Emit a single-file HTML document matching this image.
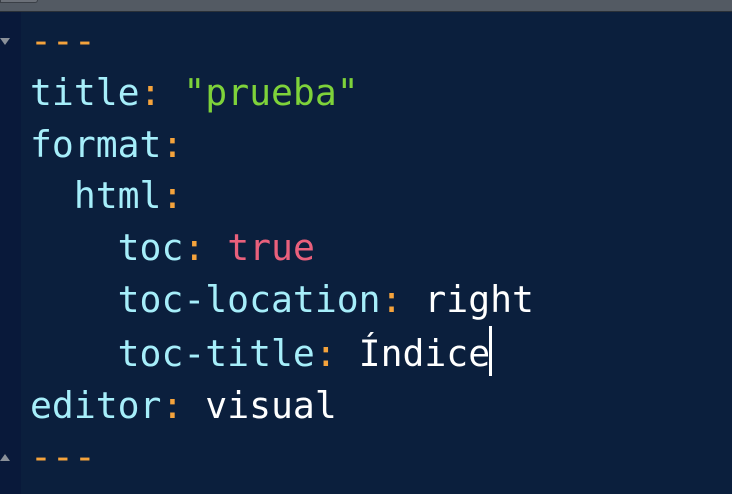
<!DOCTYPE html>
<html><head><meta charset="utf-8"><style>
html,body{margin:0;padding:0;}
body{width:732px;height:494px;background:#0b1f3d;position:relative;overflow:hidden;font-family:"DejaVu Sans Mono","Liberation Mono",monospace;}
.top{position:absolute;left:0;top:0;width:732px;height:11px;background:#535a63;border-bottom:1px solid #2a3038;}
.tab{position:absolute;left:0;top:0;width:36px;height:2px;background:#6b7078;border:1px solid #3a3f46;border-top:none;border-radius:0 0 4px 0;}
.gut{position:absolute;left:0;top:12px;width:21px;height:482px;background:#09193a;}
.code{position:absolute;left:30px;top:15px;font-size:36.4px;line-height:51.8px;white-space:pre;color:#fff;}
.k{color:#a6eefa}.p{color:#f5a33c}.s{color:#7ed23a}.b{color:#e9607c}
.cur{display:inline-block;width:3px;height:50px;background:#fff;vertical-align:-10px;margin-left:-1px;}
.tri{position:absolute;left:0;width:0;height:0;border-left:5px solid transparent;border-right:5px solid transparent;}
</style></head><body>
<div class="top"><div class="tab"></div></div>
<div class="gut"></div>
<div class="tri" style="top:38px;border-top:7px solid #8a9099;"></div>
<div class="tri" style="top:454px;border-bottom:7px solid #8a9099;"></div>
<div class="code"><span class="p">---</span>
<span class="k">title</span><span class="p">:</span> <span class="s">"prueba"</span>
<span class="k">format</span><span class="p">:</span>
  <span class="k">html</span><span class="p">:</span>
    <span class="k">toc</span><span class="p">:</span> <span class="b">true</span>
    <span class="k">toc-location</span><span class="p">:</span> right
    <span class="k">toc-title</span><span class="p">:</span> Índice<span class="cur"></span>
<span class="k">editor</span><span class="p">:</span> visual
<span class="p">---</span></div>
</body></html>
